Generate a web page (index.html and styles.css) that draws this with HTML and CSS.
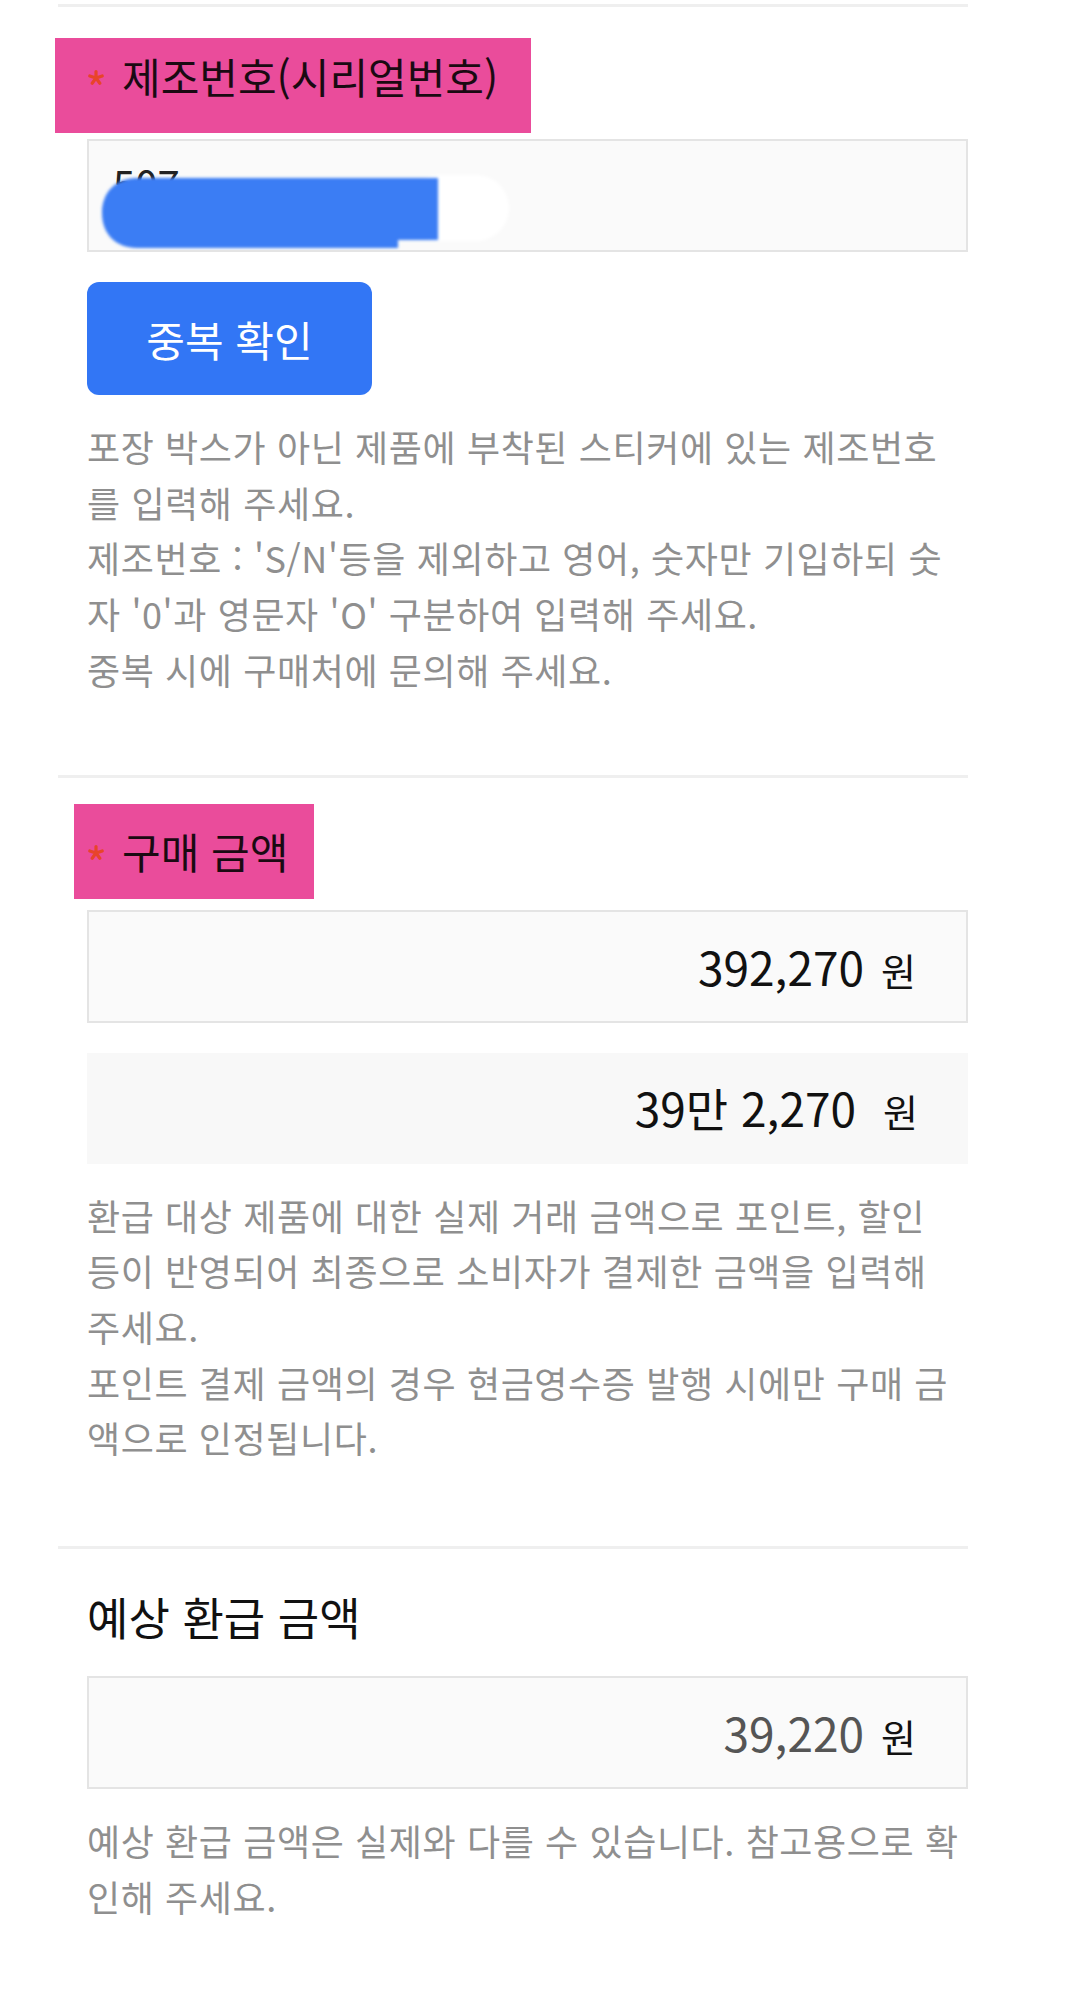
FILE: index.html
```html
<!DOCTYPE html>
<html lang="ko">

<head>
    <meta charset="UTF-8">
    <meta name="viewport" content="width=device-width, initial-scale=1.0">
    <title>환급 신청</title>

    <link rel="stylesheet" href="styles.css">
</head>

<body>
    <div class="page">
        <!-- 제조번호 -->
        <div class="section section-serial">
            <div class="label label-serial">
                <span class="star"><svg width="16" height="16" viewBox="0 0 16 16"><path d="M8 8 L8 1.6 M8 8 L14.2 6 M8 8 L11.8 13.2 M8 8 L4.2 13.2 M8 8 L1.8 6" stroke="#e8442a" stroke-width="3.2" stroke-linecap="round" /></svg></span>제조번호(시리얼번호)
            </div>
            <div class="field field-serial">
                <span class="serial-text">507</span>
                <!-- 가림 처리 -->
                <svg class="blot" width="430" height="109" viewBox="0 0 430 109">
                    <defs>
                        <filter id="soft" x="-10%" y="-20%" width="120%" height="140%">
                            <feGaussianBlur stdDeviation="1.6" />
                        </filter>
                    </defs>
                    <rect x="318" y="34" width="102" height="66" rx="33" fill="#ffffff" filter="url(#soft)" />
                    <path d="M48 37 H349 V99 H309 V107 H48 C27 107 13 93 13 72 C13 51 27 37 48 37 Z" fill="#3a7df4" filter="url(#soft)" />
                </svg>
            </div>
            <button class="btn" type="button">중복 확인</button>
            <p class="help">
                포장 박스가 아닌 제품에 부착된 스티커에 있는 제조번호<br>
                를 입력해 주세요.<br>
                제조번호 : 'S/N'등을 제외하고 영어, 숫자만 기입하되 숫<br>
                자 '0'과 영문자 'O' 구분하여 입력해 주세요.<br>
                중복 시에 구매처에 문의해 주세요.
            </p>
        </div>

        <!-- 구매 금액 -->
        <div class="section section-price">
            <div class="label label-price">
                <span class="star"><svg width="16" height="16" viewBox="0 0 16 16"><path d="M8 8 L8 1.6 M8 8 L14.2 6 M8 8 L11.8 13.2 M8 8 L4.2 13.2 M8 8 L1.8 6" stroke="#e8442a" stroke-width="3.2" stroke-linecap="round" /></svg></span>구매 금액
            </div>
            <div class="field field-price field-num"><span class="num">392,270</span><span class="unit">원</span></div>
            <div class="field field-plain field-num"><span class="num">39만 2,270</span><span class="unit unit-wide">원</span></div>
            <p class="help">
                환급 대상 제품에 대한 실제 거래 금액으로 포인트, 할인<br>
                등이 반영되어 최종으로 소비자가 결제한 금액을 입력해<br>
                주세요.<br>
                포인트 결제 금액의 경우 현금영수증 발행 시에만 구매 금<br>
                액으로 인정됩니다.
            </p>
        </div>

        <!-- 예상 환급 금액 -->
        <div class="section section-last">
            <h3 class="title">예상 환급 금액</h3>
            <div class="field field-refund field-num"><span class="num num-muted">39,220</span><span class="unit">원</span></div>
            <p class="help">
                예상 환급 금액은 실제와 다를 수 있습니다. 참고용으로 확<br>
                인해 주세요.
            </p>
        </div>
    </div>
</body>

</html>
```

FILE: styles.css
```css
* {
    margin: 0;
    padding: 0;
    box-sizing: border-box;
}

body {
    width: 1080px;
    background: #ffffff;
    font-family: "Noto Sans CJK KR", "Noto Sans", sans-serif;
    color: #111111;
}

.page {
    padding-top: 4px;
}

.section {
    margin: 0 112px 0 58px;
    border-top: 3px solid #efefef;
    padding: 0 0 77px 29px;
}

.section-price {
    padding-bottom: 80px;
}

.section-last {
    padding-bottom: 120px;
}

/* 형광펜 표시된 항목 이름 */
.label {
    display: flex;
    align-items: center;
    width: fit-content;
    background: #ea4c9b;
    font-size: 42px;
    line-height: 56px;
    color: #1a0a12;
}

.label-serial {
    margin: 31px 0 0 -32px;
    padding: 10px 33px 29px 32px;
}

.label-price {
    margin: 26px 0 0 -13px;
    padding: 19px 26px 20px 13px;
}

.star {
    display: flex;
    width: 35px;
    padding-left: 1px;
    transform: translateY(2px);
}

/* 입력칸 */
.field {
    position: relative;
    height: 113px;
    border: 2px solid #e4e4e4;
    background: #fafafa;
}

.field-serial {
    margin-top: 6px;
}

.field-price {
    margin-top: 11px;
}

.field-plain {
    margin-top: 30px;
    height: 111px;
    border: none;
    background: #f8f8f8;
}

.field-refund {
    margin-top: 31px;
}

.field-num {
    text-align: right;
    line-height: 109px;
    padding-right: 50px;
    white-space: nowrap;
}

.num {
    font-size: 46px;
    color: #111111;
}

.num-muted {
    color: #555555;
}

.unit {
    margin-left: 17px;
    font-size: 38px;
    color: #111111;
}

.unit-wide {
    margin-left: 27px;
}

.serial-text {
    display: block;
    padding-left: 24px;
    font-size: 40px;
    line-height: 84px;
    color: #222222;
}

.blot {
    position: absolute;
    left: 0;
    top: 0;
}

.btn {
    display: block;
    width: 285px;
    height: 113px;
    margin-top: 30px;
    border: none;
    border-radius: 12px;
    background: #3276f5;
    color: #ffffff;
    font-family: inherit;
    font-size: 42px;
}

.help {
    margin-top: 24px;
    font-size: 36px;
    line-height: 55.7px;
    letter-spacing: 0.6px;
    color: #8f8f8f;
    white-space: nowrap;
}

.title {
    margin-top: 40px;
    font-size: 45px;
    font-weight: normal;
    line-height: 56px;
    color: #111111;
}
```
